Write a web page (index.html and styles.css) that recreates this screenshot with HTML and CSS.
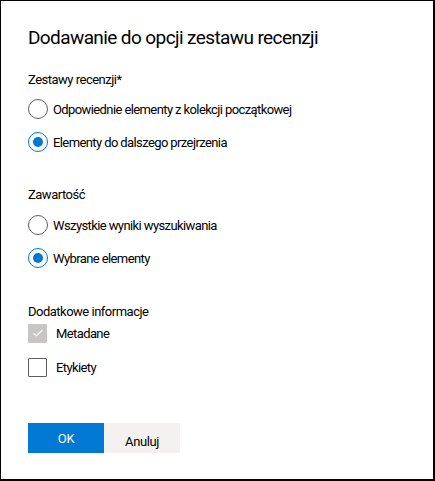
FILE: index.html
```html
<!DOCTYPE html>
<html lang="pl">
<head>
<meta charset="utf-8">
<link rel="stylesheet" href="styles.css">
</head>
<body>
<div class="dialog">
  <h1 class="title">Dodawanie do opcji zestawu recenzji</h1>

  <div class="group group-first">
    <div class="label">Zestawy recenzji*</div>
    <div class="options options-first">
      <div class="option"><span class="radio"></span><span class="opt-text">Odpowiednie elementy z kolekcji początkowej</span></div>
      <div class="option"><span class="radio checked"></span><span class="opt-text">Elementy do dalszego przejrzenia</span></div>
    </div>
  </div>

  <div class="group">
    <div class="label">Zawartość</div>
    <div class="options">
      <div class="option"><span class="radio"></span><span class="opt-text">Wszystkie wyniki wyszukiwania</span></div>
      <div class="option"><span class="radio checked"></span><span class="opt-text">Wybrane elementy</span></div>
    </div>
  </div>

  <div class="group group-last">
    <div class="label">Dodatkowe informacje</div>
    <div class="checks">
      <div class="option"><span class="checkbox disabled"><svg width="12" height="12" viewBox="0 0 12 12"><path d="M1.5 6.2 L4.3 9 L10.5 2.8" fill="none" stroke="#ffffff" stroke-width="1.1"/></svg></span><span class="chk-text">Metadane</span></div>
      <div class="option"><span class="checkbox"></span><span class="chk-text">Etykiety</span></div>
    </div>
  </div>

  <div class="buttons">
    <button class="btn btn-primary">OK</button>
    <button class="btn btn-default">Anuluj</button>
  </div>
</div>
</body>
</html>
```
FILE: styles.css
```css
html, body {
  margin: 0;
  padding: 0;
  background: #ffffff;
}
body {
  font-family: Roboto, "Liberation Sans", Arial, sans-serif;
  color: #000000;
}
.dialog {
  box-sizing: border-box;
  width: 435px;
  height: 481px;
  border: 1px solid #000000;
  border-right-width: 2px;
  border-bottom-width: 2px;
  padding: 23px 27px 0 27px;
  display: flex;
  flex-direction: column;
}
.title {
  margin: 0;
  font-size: 19px;
  font-weight: normal;
  line-height: 28px;
  letter-spacing: -0.6px;
  color: #000000;
}
.group {
  margin-top: 33px;
}
.group-first {
  margin-top: 18px;
}
.group-last {
  margin-top: 34px;
}
.label {
  font-size: 13px;
  line-height: 20px;
  letter-spacing: -0.5px;
}
.options {
  margin-top: 10px;
  display: flex;
  flex-direction: column;
  gap: 13px;
}
.options-first {
  margin-top: 9px;
}
.checks {
  margin-top: 1px;
  display: flex;
  flex-direction: column;
  gap: 14px;
}
.option {
  display: flex;
  align-items: center;
  height: 20px;
  font-size: 13px;
  letter-spacing: -0.6px;
}
.radio {
  box-sizing: border-box;
  width: 20px;
  height: 20px;
  border-radius: 50%;
  border: 1px solid #605e5c;
  flex: none;
  display: flex;
  align-items: center;
  justify-content: center;
}
.radio.checked {
  border-color: #0078d4;
}
.radio.checked::after {
  content: "";
  width: 10px;
  height: 10px;
  border-radius: 50%;
  background: #0078d4;
}
.opt-text {
  margin-left: 5px;
}
.checkbox {
  box-sizing: border-box;
  width: 19px;
  height: 19px;
  border: 1px solid #605e5c;
  border-radius: 1px;
  flex: none;
  display: flex;
  align-items: center;
  justify-content: center;
}
.checkbox.disabled {
  background: #c8c6c4;
  border-color: #c8c6c4;
}
.chk-text {
  margin-left: 9px;
}
.buttons {
  margin-top: 46px;
  display: flex;
}
.btn {
  width: 76px;
  height: 30px;
  border: none;
  margin: 0;
  padding: 0;
  font-family: Roboto, "Liberation Sans", Arial, sans-serif;
  font-size: 13px;
  letter-spacing: -0.4px;
}
.btn-primary {
  background: #0078d4;
  color: #ffffff;
}
.btn-default {
  background: #f3f2f1;
  color: #000000;
  padding-top: 6px;
}
```
